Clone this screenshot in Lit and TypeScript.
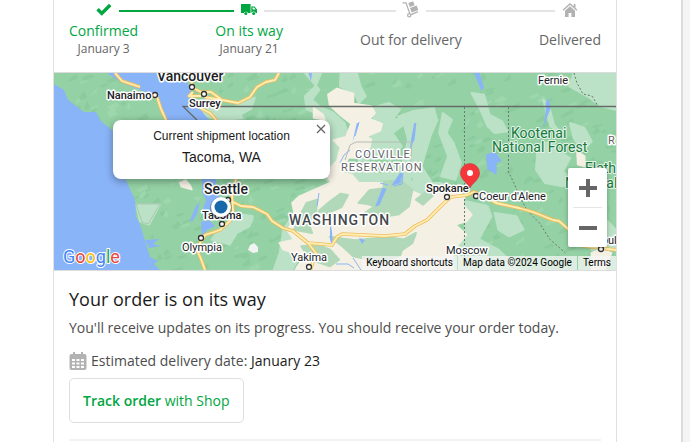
import { LitElement, html, svg, css } from "lit";
import { customElement } from "lit/decorators.js";
import { classMap } from "lit/directives/class-map.js";

const icons = {
  check: svg`<path d="M4.600 9.200 8.800 13.400 17.200 5" fill="none" stroke="currentColor" stroke-width="3.400"/>`,
  truck: svg`<path fill="currentColor" d="M3 4h9.600v9H10a2.300 2.300 0 0 0-4.200 0H3zM13.300 6.500h3.200L19 9.400V13h-1.200a2.200 2.200 0 0 0-4-.4h-.5zM14.600 7.600v2h3L16 7.600z"/><circle cx="7.800" cy="13.600" r="1.500" fill="currentColor"/><circle cx="15.700" cy="13.600" r="1.500" fill="currentColor"/>`,
  dolly: svg`<path d="M2.500 2.800H6L9.800 13.600M11 14.600l7-3" fill="none" stroke="currentColor" stroke-width="1.300"/><circle cx="9.200" cy="15.200" r="1.600" fill="none" stroke="currentColor" stroke-width="1.300"/><path fill="currentColor" d="m8.300 3 4.800-1.800 1.500 4-4.800 1.800zM10 7.900l6.600-2.500 1.700 4.700-6.600 2.500z"/>`,
  home: svg`<path d="M4 10.300 11 3.900l7 6.400" fill="none" stroke="currentColor" stroke-width="1.400"/><path fill="currentColor" d="M14.700 4h1.800v4l-1.800-1.600zM11 6.200l5 4.600V17h-3.600v-4H9.600v4H6v-6.200z"/>`,
};

interface Step {
  icon: keyof typeof icons;
  label: string;
  date?: string;
  done: boolean;
}

const steps: Step[] = [
  { icon: "check", label: "Confirmed", date: "January 3", done: true },
  { icon: "truck", label: "On its way", date: "January 21", done: true },
  { icon: "dolly", label: "Out for delivery", done: false },
  { icon: "home", label: "Delivered", done: false },
];

@customElement("order-steps")
export class OrderSteps extends LitElement {
  static styles = css`
    :host { display: block; }
    .steps { display: flex; align-items: stretch; list-style: none; margin: 0; padding: 0; color: #b2b2b2; }
    .step { display: flex; flex-direction: column; flex: none; }
    .gap { flex: 1; height: 22px; display: flex; align-items: center; }
    .gap.done .line { background: #00a63f; }
    .track { display: flex; align-items: center; height: 22px; }
    .line { flex: 1; height: 2px; background: #e4e4e4; }
    .line.done { background: #00a63f; }
    .line.none { background: transparent; }
    .icon { width: 22px; height: 22px; margin: 0 4px; flex: none; }
    .done .icon { color: #00a63f; }
    .text { flex: 1; display: flex; flex-direction: column; justify-content: center; text-align: center; color: #666; }
    .label { font-size: 14px; line-height: 18px; }
    .done .label { color: #00a63f; }
    .date { font-size: 12px; line-height: 18px; }
  `;
  render() {
    return html`<ol class="steps">
      ${steps.map((s, i) => {
        const nextDone = i + 1 < steps.length && steps[i + 1].done;
        return html`
          ${i > 0 ? html`<li class="gap" role="presentation"><span class=${classMap({ line: true, done: s.done })}></span></li>` : ""}
          <li class=${classMap({ step: true, done: s.done })}>
            <div class="track">
              <span class=${classMap({ line: true, done: s.done, none: i === 0 })}></span>
              <svg class="icon" viewBox="0 0 22 22" aria-hidden="true">${icons[s.icon]}</svg>
              <span class=${classMap({ line: true, done: nextDone, none: i === steps.length - 1 })}></span>
            </div>
            <div class="text">
              <span class="label">${s.label}</span>
              ${s.date ? html`<span class="date">${s.date}</span>` : ""}
            </div>
          </li>`;
      })}
    </ol>`;
  }
}

/* Small relief facets scattered over the forest areas. */
const relief = (() => {
  let seed = 41;
  const rnd = () => (seed = (seed * 16807) % 2147483647) / 2147483647;
  const dark: string[] = [];
  const light: string[] = [];
  for (let i = 0; i < 520; i++) {
    const x = Math.round(54 + rnd() * 562);
    const y = Math.round(73 + rnd() * 197);
    const a = Math.round(3 + rnd() * 8);
    const b = Math.round(2 + rnd() * 5);
    (i % 3 ? dark : light).push(`M${x} ${y}l${a} ${-b} ${Math.round(rnd() * 4)} ${b - 1} ${-a} 3z`);
  }
  return { dark: dark.join(""), light: light.join("") };
})();

/* Land cover is drawn on a finer grid than the labels and roads. */
const paleGreen = [
  "M395 120l60 -20 60 5 10 30 -60 8zM450 100l40 8 30 -14 40 -20 -10 34 -40 22z",
  "M700 0L745 0 730 40 700 70 705 110 735 120 765 150 770 300 800 300 815 250 790 210 820 180 810 150 780 120 740 100 720 80 740 50z",
  "M800 0l45 0 10 40 15 30 -20 20 -12 -30 -40 -20z",
  "M885 105l50 -15 30 20 -20 30 30 -5 0 20 -30 25 25 40 -30 40 -40 -5 -50 10 20 -60 10 -20 20 -20z",
  "M960 130l40 -15 60 -10 8 35 -35 35 -25 35 0 60 -15 50 -40 20 -50 -10 20 -40 50 -20 15 -70 -10 -40z",
  "M1040 130l30 10 -20 50 -25 90 30 50 -20 20 -30 -20 -10 -60 20 -80z",
  "M1085 120l25 20 -15 40 20 30 20 60 -15 50 -40 -10 20 -60 -25 -70z",
  "M1165 60l35 5 15 60 35 20 15 30 -35 5 -20 -20 -20 -50z",
  "M1365 80l15 15 15 60 15 20 -25 -15z",
  "M1450 0h118v110l-40 -10 -40 -30 -50 -30z",
  "M1350 215l40 -10 20 30 30 20 -20 40 30 30 -30 15 -50 -10 -25 -40z",
  "M1440 150l40 15 20 40 -25 30 -25 -40z",
  "M1150 385l60 15 10 30 -40 80 -35 -10zM1230 420l60 10 20 40 -40 20 -30 -20z",
  "M640 470l30 -50 40 -60 50 0 -20 60 -20 60 20 40 -50 20 -30 60 -50 0 20 -60z",
  "M460 470l70 -45 25 5 -10 30 -35 20 -20 35 -50 -15z",
  "M230 395l65 0 -30 60 -25 -10z",
  "M1090 510l40 -40 40 20 70 40 60 61h-200zM1500 440l40 0 28 30v60h-68z",
  "M760 320l60 -50 110 40 90 20 60 0 50 30 -20 40 -200 20z",
];

const sand = [
  "M765 65l25 -18 45 15 0 30 50 8 10 20 -15 18 35 15 -5 20 -40 18 15 8 -5 25 -25 5 -10 25 -25 0 -10 40 -30 40 -15 -20 -2 -20 27 -30 10 -42 -20 -20 35 -10 15 -40 -30 -25 -30 -30z",
  "M725 105l25 20 5 15 -30 -6zM352 330l15 -8 12 15 5 12 -28 -8z",
  "M770 330l30 -30 30 5 20 25 70 0 80 25 50 25 20 -35 50 -5 25 35 -5 20 25 30 -15 20 -30 10 30 30 -30 40 -10 35 10 60 -460 0 20 -40 20 -30 -60 -20 -10 -20 40 -10 -20 -30 25 -30 -10 -50 20 -20z",
  "M1460 235l20 15 0 30 -18 -5zM1500 540l25 -10 30 10 -20 51h-35z",
];

const valley = [
  "M850 390l30 -38 40 -6 0 -20 45 -4 35 28 -10 50 -28 24 -60 10 -35 -14 28 -20 -25 -8z",
  "M738 415l30 -28 32 -25 20 4 -18 36 -42 20z",
  "M770 492l70 10 90 -10 50 8 -15 50 -60 15 -70 -15 -30 -30z",
  "M690 520l45 -5 35 15 25 30 -25 20 -55 -20z",
  "M940 530l35 -30 35 -20 -10 30 -40 30zM1010 380l30 -25 20 10 -30 30z",
  "M670 470l20 -50 15 -30 30 -10 -5 40 -20 30 10 30z",
];

const lakes = [
  "M1205 245l25 -10 20 30 -15 5 0 35 -25 -15z",
  "M1172 0l16 0 12 45 -8 8zM1372 90l8 -15 6 30 -8 22 -14 40 8 -50z",
  "M965 300l8 0 -6 30 -26 8z",
  "M916 345l12 2 -20 50 -12 4z",
  "M1005 150l6 0 -5 50 -14 30 6 -40z",
  "M710 0h10l-3 25zM845 150l6 2 -18 55z",
];

const water = [
  "M54 84l10 6 4 10 16 12 12 0 4 8 14 12 0 40 12 8 9 20 1 17 4 7 6 20 4 13 1 17 1 13H54z",
  "M107 73l15 10 18 7 14 5 8 17 6 14h46l-10-12-10-14-4-12-6-12-14-3-12 0z",
  "M202 178h14l0 12 4 8-6 6-2 8-6 6-4-6 4-12-4-8zM190 220l6-14 4-4-3 12-5 8zM201 222l8-2 6 6-8 4-5 7z",
  "M145 240l14-1-6 5 8 2-12 2zM150 257l8 4-4 3 6 6h-9z",
  "M359 238l6 2-3 4zM330 220l2 12 1 16-3-8z",
];

const roads = [
  "M233 202l8 4 12 1 14 7 5 7 11 7 10 3 15 12 24 2 5-8 5-3 43 2 20-2 10-8 12-6 15-15 9-8 16-2 7-3 9 4 13 7 23 5 14 4 20 8 6 1 15 13 10 12 32 4 12 6",
  "M308 243l8 10-4 12-2 6",
  "M189 73l4 15 8 4 10 0 11 8 16 3 12-6 7-10 9-5 9-2 4-7M193 92l-4 4 12 0M200 108l10 5 7 8M204 97l18 3",
  "M236 179l-4 14 1 18-3 10-10 9-15 5-5 8-3 7 4 9 4 11",
  "M115 73l7 8 18 6M157 97l4 12 5 11",
];

interface Place { t: string; x: number; y: number; c: string }
const places: Place[] = [
  { t: "Vancouver", x: 157, y: 81, c: "city" },
  { t: "Seattle", x: 204, y: 194, c: "city" },
  { t: "Nanaimo", x: 107, y: 99, c: "town" },
  { t: "Surrey", x: 189, y: 107, c: "town" },
  { t: "Tacoma", x: 202, y: 219, c: "town" },
  { t: "Olympia", x: 182, y: 251, c: "small" },
  { t: "Yakima", x: 291, y: 261, c: "small" },
  { t: "Fernie", x: 538, y: 84, c: "small" },
  { t: "Spokane", x: 426, y: 192, c: "town" },
  { t: "Coeur d'Alene", x: 479, y: 200, c: "small" },
  { t: "Moscow", x: 446, y: 254, c: "small" },
  { t: "Missoula", x: 578, y: 244, c: "small" },
  { t: "COLVILLE", x: 355, y: 158, c: "area" },
  { t: "RESERVATION", x: 341, y: 171, c: "area" },
  { t: "WASHINGTON", x: 289, y: 225, c: "state" },
  { t: "Kootenai", x: 511, y: 138, c: "park" },
  { t: "National Forest", x: 492, y: 152, c: "park" },
  { t: "Flathead", x: 585, y: 173, c: "park" },
  { t: "National", x: 565, y: 188, c: "park" },
  { t: "R", x: 608, y: 144, c: "area" },
];

const dots = [[155, 95], [192, 87], [204, 94], [228, 200], [222, 224], [201, 238], [309, 267], [447, 197], [476, 196], [601, 249]];

@customElement("shipment-map")
export class ShipmentMap extends LitElement {
  static styles = css`
    :host { display: block; position: relative; height: 197px; overflow: hidden; font-family: Roboto, sans-serif; }
    .canvas { display: block; width: 100%; height: 100%; }
    .halo { paint-order: stroke; stroke: #fff; stroke-width: 3px; stroke-linejoin: round; fill: #202124; }
    .city { font-size: 14px; font-weight: 500; }
    .town { font-size: 11px; font-weight: 500; }
    .small { font-size: 11px; }
    .area { font-size: 11px; letter-spacing: 1px; fill: #5f6368; }
    .state { font-size: 14px; font-weight: 500; letter-spacing: 1px; fill: #45494d; }
    .park { font-size: 14px; fill: #14793a; stroke: #e6f4ea; stroke-width: 2px; }
    .logo { font-size: 18px; stroke-width: 2px; }
    .info { position: absolute; left: 59px; top: 47px; width: 217px; box-sizing: border-box; padding: 8px 0 12px; border-radius: 8px; background: #fff; box-shadow: 0 2px 7px 1px rgba(0, 0, 0, 0.3); text-align: center; color: #1a1a1a; font-family: "Liberation Sans", Arial, sans-serif; }
    .info-title { margin: 0; font-size: 12px; line-height: 16px; }
    .info-place { margin: 3px 0 0; font-size: 14px; line-height: 20px; }
    button { border: 0; padding: 0; background: none; display: grid; place-items: center; color: #666; }
    .close { position: absolute; top: 2px; right: 2px; width: 14px; height: 14px; }
    .zoom { position: absolute; right: 9px; bottom: 23px; width: 39px; background: #fff; border-radius: 2px; box-shadow: 0 1px 4px rgba(0, 0, 0, 0.3); }
    .zoom button { width: 100%; height: 39px; }
    .zoom hr { margin: 0 5px; border: 0; height: 1px; background: #e6e6e6; }
    .legal { position: absolute; right: 0; bottom: 0; display: flex; gap: 1px; font-size: 10px; line-height: 14px; }
    .legal > * { padding: 0 5px; background: rgba(245, 245, 245, 0.75); color: #000; text-decoration: none; }
    .legal .keys { font: inherit; padding: 0 4px; }
  `;
  render() {
    return html`
      <svg class="canvas" viewBox="54 73 562 197" preserveAspectRatio="xMidYMid slice" role="img" aria-label="Map of Washington">
        <rect x="54" y="73" width="562" height="197" fill="#94d2a5"/>
        <path d=${relief.dark} fill="#83c597" opacity=".55"/>
        <path d=${relief.light} fill="#a5dbb3" opacity=".6"/>
        <g transform="translate(54 73) scale(.3584 .3333)" stroke-width="6" stroke-linejoin="round">
          <g fill="#bbe2c6" stroke="#bbe2c6">${paleGreen.map((d) => svg`<path d=${d}/>`)}</g>
          <g fill="#f5f0e4" stroke="#f5f0e4">${sand.map((d) => svg`<path d=${d}/>`)}</g>
          <g fill="#b0d8b9" stroke="#b0d8b9">${valley.map((d) => svg`<path d=${d}/>`)}</g>
          <g fill="#8ab4f8">${lakes.map((d) => svg`<path d=${d}/>`)}</g>
        </g>
        <g fill="#8ab4f8">${water.map((d) => svg`<path d=${d}/>`)}</g>
        <g fill="none" stroke="#8ab4f8">
          <path d="M359 122l-4 14M350 150l-6 5-4 8M403 172l-1 12-8 2M319 193l-2 13M380 183l8 2M353 258l8 12M336 264h12l6 4"/>
        </g>
        <path d="M345 160l5-15 6-3h56l-2 28" fill="none" stroke="#b4bcb4"/>
        <path d="M136 204h24l-12 20-6-2z" fill="none" stroke="#abc7b2"/>
        <path d="M197 120l-14-13.500H616" fill="none" stroke="#666b69" stroke-width="1.300"/>
        <path d="M464.500 107V258M508.500 107v65l5 10 6 14 8 15 12 12 10 16 16 14M574 73l3 10 6 11 9 2 6 10" fill="none" stroke="#69796f" stroke-dasharray="2 2"/>
        <g fill="none" stroke="#edbf5c" stroke-width="3.600" stroke-linejoin="round">${roads.map((d) => svg`<path d=${d}/>`)}</g>
        <g fill="none" stroke="#ffedb3" stroke-width="1.800" stroke-linejoin="round">${roads.map((d) => svg`<path d=${d}/>`)}</g>
        <path d="M248 250l2-5 4-2 4 4v5l-5 1z" fill="#f1f3f2"/>
        <g fill="#fff" stroke="#333" stroke-width="1.300">${dots.map(([x, y]) => svg`<circle cx=${x} cy=${y} r="2.500"/>`)}</g>
        ${places.map((p) => svg`<text class=${"halo " + p.c} x=${p.x} y=${p.y}>${p.t}</text>`)}
        <circle cx="221" cy="208" r="11" fill="#000" opacity=".25"/>
        <circle cx="221" cy="207" r="10" fill="#fff"/>
        <circle cx="221" cy="207" r="6.500" fill="#1769aa"/>
        <path d="M470 188c-2-5-9.500-8-9.500-15a9.500 9.500 0 0 1 19 0c0 7-7.500 10-9.500 15z" fill="#f5363a" stroke="#c93434" stroke-width=".6"/>
        <circle cx="470" cy="173" r="3" fill="#fff"/>
        <text class="halo logo" x="63" y="263"><tspan fill="#4285f4">G</tspan><tspan fill="#ea4335">o</tspan><tspan fill="#fbbc04">o</tspan><tspan fill="#4285f4">g</tspan><tspan fill="#34a853">l</tspan><tspan fill="#ea4335">e</tspan></text>
      </svg>
      <div class="info" role="dialog" aria-label="Current shipment location">
        <p class="info-title">Current shipment location</p>
        <p class="info-place">Tacoma, WA</p>
        <button class="close" aria-label="Close"><svg width="10" height="10" viewBox="0 0 10 10"><path d="M1 1l8 8M9 1L1 9" fill="none" stroke="currentColor" stroke-width="1.300"/></svg></button>
      </div>
      <div class="zoom">
        <button aria-label="Zoom in"><svg width="18" height="18" viewBox="0 0 18 18"><path d="M0 9h18M9 0v18" stroke="currentColor" stroke-width="4"/></svg></button>
        <hr>
        <button aria-label="Zoom out"><svg width="18" height="18" viewBox="0 0 18 18"><path d="M0 9h18" stroke="currentColor" stroke-width="4"/></svg></button>
      </div>
      <div class="legal">
        <button class="keys">Keyboard shortcuts</button>
        <span>Map data ©2024 Google</span>
        <a href="#terms">Terms</a>
      </div>`;
  }
}

@customElement("app-root")
export class AppRoot extends LitElement {
  static styles = css`
    :host { display: flex; min-height: 100vh; box-sizing: border-box; background: #fff; font-family: "Open Sans", "Noto Sans", sans-serif; overflow: hidden; }
    .page { flex: 1; min-width: 0; padding: 0 64px 0 53px; }
    .rail { flex: none; width: 7px; border-left: 2px solid #dcdcdc; background: #f4f4f4; }
    .card { box-sizing: border-box; min-height: 100%; border: solid #e0e0e0; border-width: 0 1px; }
    .steps { padding: 0 15px 14px; }
    .map { border: solid #dcdcdc; border-width: 1px 0; }
    .body { padding: 16px 15px 0; }
    h2 { margin: 0; font-size: 18px; line-height: 24px; font-weight: 400; color: #1a1a1a; }
    .note { margin: 7px 0 0; font-size: 14px; line-height: 20px; color: #4d4d4d; }
    .eta { display: flex; align-items: center; gap: 4px; margin: 13px 0 7px; font-size: 14px; line-height: 20px; color: #4d4d4d; }
    .eta b { font-weight: 400; color: #1a1a1a; }
    .eta svg { color: #b2b2b2; }
    .track { display: flex; width: fit-content; align-items: center; box-sizing: border-box; height: 45px; padding: 0 13px; border: 1px solid #dedede; border-radius: 5px; color: #00a63f; font-size: 14px; text-decoration: none; white-space: pre; }
    .track b { font-weight: 600; }
    .rule { margin: 16px 0 0; border: 0; height: 2px; background: #f2f2f2; }
  `;
  render() {
    return html`
      <main class="page">
        <section class="card">
          <order-steps class="steps"></order-steps>
          <shipment-map class="map"></shipment-map>
          <div class="body">
            <h2>Your order is on its way</h2>
            <p class="note">You'll receive updates on its progress. You should receive your order today.</p>
            <p class="eta">
              <svg width="18" height="18" viewBox="0 0 18 18" aria-hidden="true"><path fill="currentColor" fill-rule="evenodd" d="M4 0h2v2h6V0h2v2h1.500A2 2 0 0 1 17.500 4v12a2 2 0 0 1-2 2h-13a2 2 0 0 1-2-2V4a2 2 0 0 1 2-2H4zM3 7v2h3V7zm4.500 0v2h3V7zM12 7v2h3V7zM3 10.500v2h3v-2zm4.500 0v2h3v-2zm4.500 0v2h3v-2zM3 14v2h3v-2zm4.500 0v2h3v-2zm4.500 0v2h3v-2z"/></svg>
              <span>Estimated delivery date: <b>January 23</b></span>
            </p>
            <a class="track" href="#track"><b>Track order</b> with Shop</a>
            <hr class="rule">
          </div>
        </section>
      </main>
      <div class="rail"></div>`;
  }
}
